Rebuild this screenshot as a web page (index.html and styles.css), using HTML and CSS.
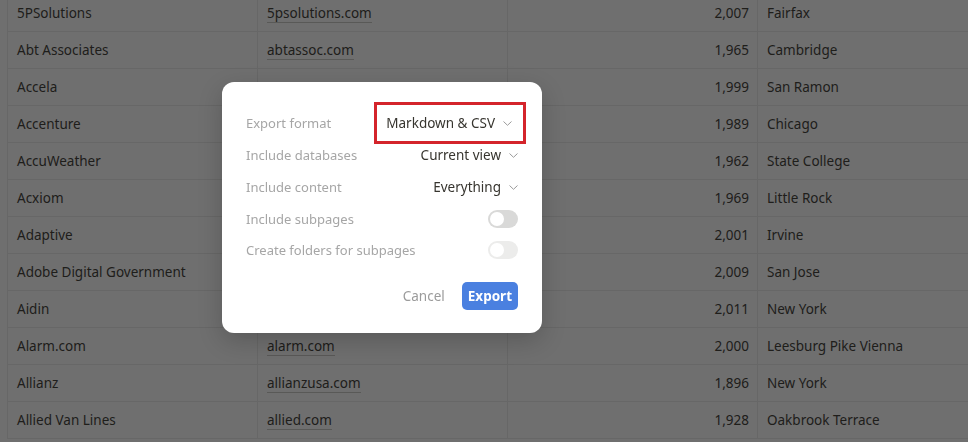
FILE: index.html
```html
<!DOCTYPE html>
<html lang="en">
<head>
  <meta charset="UTF-8" />
  <title>Export</title>
  <link rel="stylesheet" href="styles.css">
</head>
<body>
  <table class="db-table">
    <tbody>
      <tr><td>5PSolutions</td><td><span class="url">5psolutions.com</span></td><td class="num">2,007</td><td>Fairfax</td></tr>
      <tr><td>Abt Associates</td><td><span class="url">abtassoc.com</span></td><td class="num">1,965</td><td>Cambridge</td></tr>
      <tr><td>Accela</td><td></td><td class="num">1,999</td><td>San Ramon</td></tr>
      <tr><td>Accenture</td><td></td><td class="num">1,989</td><td>Chicago</td></tr>
      <tr><td>AccuWeather</td><td></td><td class="num">1,962</td><td>State College</td></tr>
      <tr><td>Acxiom</td><td></td><td class="num">1,969</td><td>Little Rock</td></tr>
      <tr><td>Adaptive</td><td></td><td class="num">2,001</td><td>Irvine</td></tr>
      <tr><td>Adobe Digital Government</td><td></td><td class="num">2,009</td><td>San Jose</td></tr>
      <tr><td>Aidin</td><td></td><td class="num">2,011</td><td>New York</td></tr>
      <tr><td>Alarm.com</td><td><span class="url">alarm.com</span></td><td class="num">2,000</td><td>Leesburg Pike Vienna</td></tr>
      <tr><td>Allianz</td><td><span class="url">allianzusa.com</span></td><td class="num">1,896</td><td>New York</td></tr>
      <tr><td>Allied Van Lines</td><td><span class="url">allied.com</span></td><td class="num">1,928</td><td>Oakbrook Terrace</td></tr>
    </tbody>
  </table>

  <div class="overlay">
    <div class="modal">
      <div class="opt-row">
        <span class="opt-label">Export format</span>
        <button class="select marked">Markdown &amp; CSV
          <svg class="chev" width="9" height="5" viewBox="0 0 9 5"><path d="M0.5 0.5 L4.5 4.3 L8.5 0.5" fill="none" stroke="#9b9b9b" stroke-width="1"/></svg>
        </button>
      </div>
      <div class="opt-row">
        <span class="opt-label">Include databases</span>
        <button class="select">Current view
          <svg class="chev" width="9" height="5" viewBox="0 0 9 5"><path d="M0.5 0.5 L4.5 4.3 L8.5 0.5" fill="none" stroke="#9b9b9b" stroke-width="1"/></svg>
        </button>
      </div>
      <div class="opt-row">
        <span class="opt-label">Include content</span>
        <button class="select">Everything
          <svg class="chev" width="9" height="5" viewBox="0 0 9 5"><path d="M0.5 0.5 L4.5 4.3 L8.5 0.5" fill="none" stroke="#9b9b9b" stroke-width="1"/></svg>
        </button>
      </div>
      <div class="opt-row">
        <span class="opt-label">Include subpages</span>
        <span class="toggle"><span class="knob"></span></span>
      </div>
      <div class="opt-row">
        <span class="opt-label">Create folders for subpages</span>
        <span class="toggle disabled"><span class="knob"></span></span>
      </div>

      <div class="actions">
        <button class="btn-cancel">Cancel</button>
        <button class="btn-export">Export</button>
      </div>
    </div>
  </div>
</body>
</html>
```

FILE: styles.css
```css
body {
  margin: 0;
  font-family: "Noto Sans", "Open Sans", sans-serif;
  background: #fff;
  color: #37352f;
  overflow: hidden;
}

.db-table {
  border-collapse: collapse;
  margin: -5.5px 0 0 7px;
  table-layout: fixed;
  width: 1000px;
  font-size: 13.5px;
}

.db-table td {
  box-sizing: border-box;
  width: 250px;
  height: 37px;
  padding: 0 8px 0 9px;
  border-left: 1px solid #ebebea;
  border-bottom: 1px solid #ebebea;
  white-space: nowrap;
  overflow: hidden;
}

.db-table td.num {
  text-align: right;
}

.url {
  border-bottom: 1px solid #c9c8c4;
}

.overlay {
  position: fixed;
  inset: 0;
  background: rgba(15, 15, 15, 0.6);
  padding: 82px 0 0 222px;
}

.modal {
  width: 272px;
  background: #fff;
  border-radius: 12px;
  padding: 25px 24px 23px;
  box-shadow: 0 8px 24px rgba(0, 0, 0, 0.2);
}

.opt-row {
  display: flex;
  justify-content: space-between;
  align-items: center;
  height: 32px;
}

.opt-row:nth-child(4),
.opt-row:nth-child(5) {
  height: 31px;
}

.opt-label {
  font-size: 13px;
  color: #a6a6a6;
}

.select {
  display: flex;
  align-items: center;
  gap: 8px;
  font-family: inherit;
  font-size: 13.5px;
  color: #37352f;
  background: none;
  border: none;
  padding: 4px 6px;
  margin-right: -6px;
}

.select.marked {
  outline: 3px solid #d4242b;
  outline-offset: 5px;
  margin-right: 0;
  padding-left: 4px;
}

.toggle {
  width: 30px;
  height: 18px;
  border-radius: 9px;
  background: #d9d9d8;
  display: flex;
  align-items: center;
  padding: 0 2px;
  box-sizing: border-box;
}

.toggle .knob {
  width: 14px;
  height: 14px;
  border-radius: 50%;
  background: #fff;
}

.toggle.disabled {
  background: #ececeb;
}

.actions {
  display: flex;
  justify-content: flex-end;
  align-items: center;
  gap: 9px;
  margin-top: 17px;
}

.btn-cancel {
  font-family: inherit;
  font-size: 13.5px;
  color: #9b9b9b;
  background: none;
  border: none;
  padding: 4px 8px;
}

.btn-export {
  font-family: inherit;
  font-size: 13.5px;
  font-weight: 700;
  color: #fff;
  background: #4a80e0;
  border: none;
  border-radius: 5px;
  height: 28px;
  padding: 0 6px;
}
```
